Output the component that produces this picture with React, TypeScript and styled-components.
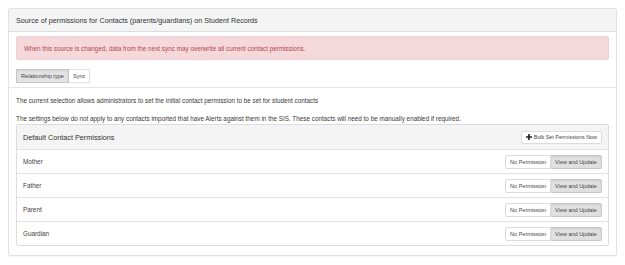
import React from 'react';
import styled, { createGlobalStyle } from 'styled-components';

const GlobalStyle = createGlobalStyle`
  html, body {
    margin: 0;
    padding: 0;
    background: #fff;
  }
  body {
    font-family: "Liberation Sans", Arial, sans-serif;
    color: #333;
  }
`;

const Page = styled.div`
  padding: 8px;
  width: 625px;
  box-sizing: border-box;
`;

const Panel = styled.div`
  width: 609px;
  border: 1px solid #e2e2e2;
  border-radius: 2px;
  box-shadow: 0 1px 1px rgba(0, 0, 0, 0.04);
  box-sizing: border-box;
`;

const PanelHeading = styled.div`
  height: 23px;
  display: flex;
  align-items: center;
  padding: 0 7px;
  background: #f4f4f4;
  border-bottom: 1px solid #dcdcdc;
  box-sizing: border-box;
  font-size: 7.2px;
  color: #333;
`;

const Section = styled.div<{ $divider?: boolean }>`
  padding: ${(p) => (p.$divider ? '8px 7px 9px' : '4px 7px 4px')};
  border-top: ${(p) => (p.$divider ? '1px solid #e6e6e6' : 'none')};
`;

const Alert = styled.div`
  height: 24px;
  display: flex;
  align-items: center;
  padding: 0 7px;
  background: #f4d8db;
  border: 1px solid #efd0d4;
  border-radius: 2px;
  color: #b6494b;
  font-size: 6.35px;
  box-sizing: border-box;
  margin-bottom: 9px;
`;

const Tabs = styled.div`
  display: flex;
`;

const Tab = styled.button<{ $active?: boolean }>`
  height: 14px;
  padding: 0 4px;
  border: 1px solid ${(p) => (p.$active ? '#c8c8c8' : '#e2e2e2')};
  background: ${(p) => (p.$active ? '#e3e3e3' : '#fff')};
  box-shadow: ${(p) => (p.$active ? 'inset 0 1px 2px rgba(0,0,0,0.08)' : 'none')};
  font-family: inherit;
  font-size: 5.6px;
  color: #444;
  margin: 0;
  & + & {
    border-left: none;
  }
`;

const Paragraph = styled.p`
  margin: 0;
  font-size: 6.35px;
  line-height: 10px;
  color: #3a3a3a;
  & + & {
    margin-top: 8px;
  }
`;

const InnerPanel = styled.div`
  border: 1px solid #dcdcdc;
  border-radius: 2px;
`;

const InnerHeading = styled.div`
  height: 24px;
  display: flex;
  align-items: center;
  justify-content: space-between;
  padding: 0 6px;
  background: #f4f4f4;
  font-size: 7.25px;
  box-sizing: border-box;
`;

const Button = styled.button<{ $active?: boolean }>`
  height: 13px;
  display: inline-flex;
  align-items: center;
  gap: 2px;
  padding: 0 4px;
  border: 1px solid ${(p) => (p.$active ? '#c8c8c8' : '#dcdcdc')};
  background: ${(p) => (p.$active ? '#e0e0e0' : '#fff')};
  box-shadow: ${(p) => (p.$active ? 'inset 0 1px 2px rgba(0,0,0,0.08)' : 'none')};
  border-radius: 2px;
  font-family: inherit;
  font-size: 5.4px;
  color: #444;
  white-space: nowrap;
  margin: 0;
`;

const Group = styled.div`
  display: flex;
  ${Button} {
    height: 14px;
    padding: 0;
    border-radius: 0;
    justify-content: center;
    font-size: 5.5px;
  }
  ${Button}:first-child {
    border-radius: 2px 0 0 2px;
    width: 46px;
  }
  ${Button}:last-child {
    border-radius: 0 2px 2px 0;
    border-left: none;
    width: 51px;
  }
`;

const Row = styled.div`
  height: 24px;
  display: flex;
  align-items: center;
  justify-content: space-between;
  padding: 0 6px;
  border-top: 1px solid #e2e2e2;
  box-sizing: border-box;
  font-size: 6.35px;
  color: #444;
`;

const PlusIcon = () => (
  <svg width="6" height="6" viewBox="0 0 10 10">
    <path d="M3.6 0h2.8v3.6H10v2.8H6.4V10H3.6V6.4H0V3.6h3.6z" fill="#222" />
  </svg>
);

const relationships = ['Mother', 'Father', 'Parent', 'Guardian'];

export default function App() {
  return (
    <Page>
      <GlobalStyle />
      <Panel>
        <PanelHeading>Source of permissions for Contacts (parents/guardians) on Student Records</PanelHeading>
        <Section>
          <Alert>
            When this source is changed, data from the next sync may overwrite all current contact permissions.
          </Alert>
          <Tabs>
            <Tab $active>Relationship type</Tab>
            <Tab>Sync</Tab>
          </Tabs>
        </Section>
        <Section $divider>
          <Paragraph>
            The current selection allows administrators to set the initial contact permission to be set for student
            contacts
          </Paragraph>
          <Paragraph>
            The settings below do not apply to any contacts imported that have Alerts against them in the SIS. These
            contacts will need to be manually enabled if required.
          </Paragraph>
          <InnerPanel>
            <InnerHeading>
              Default Contact Permissions
              <Button>
                <PlusIcon />
                Bulk Set Permissions Now
              </Button>
            </InnerHeading>
            {relationships.map((name) => (
              <Row key={name}>
                {name}
                <Group>
                  <Button>No Permission</Button>
                  <Button $active>View and Update</Button>
                </Group>
              </Row>
            ))}
          </InnerPanel>
        </Section>
      </Panel>
    </Page>
  );
}
